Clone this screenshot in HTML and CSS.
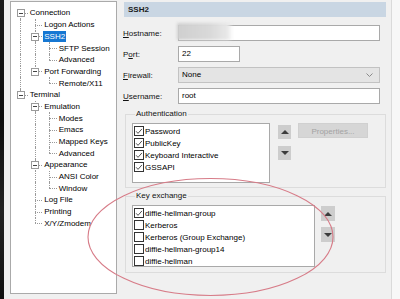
FILE: index.html
```html
<!DOCTYPE html>
<html>
<head>
<meta charset="utf-8">
<link rel="stylesheet" href="styles.css">
</head>
<body>
<div class="window">
  <div class="edge"></div>
  <div class="tree">
    <div class="row"><span class="c f"><span class="exp"></span></span><span class="lbl">Connection</span></div>
    <div class="row"><span class="c v"></span><span class="c t"></span><span class="lbl">Logon Actions</span></div>
    <div class="row"><span class="c v"></span><span class="c t"><span class="exp"></span></span><span class="lbl sel">SSH2</span></div>
    <div class="row"><span class="c v"></span><span class="c v"></span><span class="c t"></span><span class="lbl">SFTP Session</span></div>
    <div class="row"><span class="c v"></span><span class="c v"></span><span class="c l"></span><span class="lbl">Advanced</span></div>
    <div class="row"><span class="c v"></span><span class="c l"><span class="exp"></span></span><span class="lbl">Port Forwarding</span></div>
    <div class="row"><span class="c v"></span><span class="c"></span><span class="c l"></span><span class="lbl">Remote/X11</span></div>
    <div class="row"><span class="c l"><span class="exp"></span></span><span class="lbl">Terminal</span></div>
    <div class="row"><span class="c"></span><span class="c t"><span class="exp"></span></span><span class="lbl">Emulation</span></div>
    <div class="row"><span class="c"></span><span class="c v"></span><span class="c t"></span><span class="lbl">Modes</span></div>
    <div class="row"><span class="c"></span><span class="c v"></span><span class="c t"></span><span class="lbl">Emacs</span></div>
    <div class="row"><span class="c"></span><span class="c v"></span><span class="c t"></span><span class="lbl">Mapped Keys</span></div>
    <div class="row"><span class="c"></span><span class="c v"></span><span class="c l"></span><span class="lbl">Advanced</span></div>
    <div class="row"><span class="c"></span><span class="c t"><span class="exp"></span></span><span class="lbl">Appearance</span></div>
    <div class="row"><span class="c"></span><span class="c v"></span><span class="c t"></span><span class="lbl">ANSI Color</span></div>
    <div class="row"><span class="c"></span><span class="c v"></span><span class="c l"></span><span class="lbl">Window</span></div>
    <div class="row"><span class="c"></span><span class="c t"></span><span class="lbl">Log File</span></div>
    <div class="row"><span class="c"></span><span class="c t"></span><span class="lbl">Printing</span></div>
    <div class="row"><span class="c"></span><span class="c l"></span><span class="lbl">X/Y/Zmodem</span></div>
  </div>

  <div class="panel">
    <div class="header">SSH2</div>
    <div class="form">
      <label class="flabel"><u>H</u>ostname:</label>
      <div class="field"><span class="redact"></span></div>
      <label class="flabel">P<u>o</u>rt:</label>
      <div class="field port">22</div>
      <label class="flabel"><u>F</u>irewall:</label>
      <div class="field select"><span>None</span><svg class="chev" width="7" height="4" viewBox="0 0 7 4"><path d="M0.5 0.5 L3.5 3.5 L6.5 0.5" fill="none" stroke="#8a8a8a" stroke-width="1"/></svg></div>
      <label class="flabel"><u>U</u>sername:</label>
      <div class="field">root</div>
    </div>

    <fieldset class="group auth">
      <legend>Authentication</legend>
      <div class="gbody">
        <div class="list auth-list">
          <div class="item"><span class="cb on"><svg width="9" height="9" viewBox="0 0 9 9"><path d="M1.3 4.3 L3.4 6.6 L7.8 1.6" fill="none" stroke="#3a3a3a" stroke-width="1"/></svg></span>Password</div>
          <div class="item"><span class="cb on"><svg width="9" height="9" viewBox="0 0 9 9"><path d="M1.3 4.3 L3.4 6.6 L7.8 1.6" fill="none" stroke="#3a3a3a" stroke-width="1"/></svg></span>PublicKey</div>
          <div class="item"><span class="cb on"><svg width="9" height="9" viewBox="0 0 9 9"><path d="M1.3 4.3 L3.4 6.6 L7.8 1.6" fill="none" stroke="#3a3a3a" stroke-width="1"/></svg></span>Keyboard Interactive</div>
          <div class="item"><span class="cb on"><svg width="9" height="9" viewBox="0 0 9 9"><path d="M1.3 4.3 L3.4 6.6 L7.8 1.6" fill="none" stroke="#3a3a3a" stroke-width="1"/></svg></span>GSSAPI</div>
        </div>
        <div class="arrows auth-arrows">
          <span class="abtn"><span class="tri up"></span></span>
          <span class="abtn"><span class="tri down"></span></span>
        </div>
        <div class="props">Properties...</div>
      </div>
    </fieldset>

    <fieldset class="group kex">
      <legend>Key exchange</legend>
      <div class="gbody">
        <div class="list kex-list">
          <div class="item"><span class="cb on"><svg width="9" height="9" viewBox="0 0 9 9"><path d="M1.3 4.3 L3.4 6.6 L7.8 1.6" fill="none" stroke="#3a3a3a" stroke-width="1"/></svg></span>diffie-hellman-group</div>
          <div class="item"><span class="cb"></span>Kerberos</div>
          <div class="item"><span class="cb"></span>Kerberos (Group Exchange)</div>
          <div class="item"><span class="cb"></span>diffie-hellman-group14</div>
          <div class="item"><span class="cb"></span>diffie-hellman</div>
        </div>
        <div class="arrows kex-arrows">
          <span class="abtn"><span class="tri up"></span></span>
          <span class="abtn"><span class="tri down"></span></span>
        </div>
      </div>
    </fieldset>
  </div>
  <div class="rstrip"></div>
</div>
<svg class="mark" width="400" height="299" viewBox="0 0 400 299"><ellipse cx="210.5" cy="237" rx="122.5" ry="58.5" fill="none" stroke="#d77c88" stroke-width="1.1"/></svg>
</body>
</html>
```

FILE: styles.css
```css
html, body {
  margin: 0;
  padding: 0;
}
body {
  width: 400px;
  height: 299px;
  overflow: hidden;
  background: #f0f0f0;
  font-family: "Liberation Sans", Arial, sans-serif;
  font-size: 8px;
  color: #000;
  position: relative;
}
.window {
  display: flex;
  height: 299px;
}
.edge {
  width: 4px;
  flex: none;
  background: linear-gradient(180deg, #1b1b1b, #0e0e0e 40%, #222 70%, #111);
}
.tree {
  flex: none;
  box-sizing: border-box;
  width: 107px;
  height: 293px;
  margin: 1px 0 0 6px;
  border: 1px solid #aaaaaa;
  background: #fff;
  padding: 5.15px 0 0 2.25px;
}
.row {
  display: flex;
  align-items: center;
  height: 11.7px;
  white-space: nowrap;
}
.c {
  position: relative;
  flex: none;
  width: 14.5px;
  height: 100%;
}
.c.v::before, .c.t::before, .c.l::before, .c.f::before {
  content: "";
  position: absolute;
  left: 7px;
  top: 0;
  bottom: 0;
  border-left: 1px dotted #9a9a9a;
}
.c.l::before { bottom: 50%; }
.c.f::before { top: 50%; }
.c.t::after, .c.l::after, .c.f::after {
  content: "";
  position: absolute;
  left: 7px;
  right: 0;
  top: 50%;
  border-top: 1px dotted #9a9a9a;
}
.exp {
  position: absolute;
  z-index: 1;
  left: 3.5px;
  top: 2.35px;
  box-sizing: border-box;
  width: 8px;
  height: 8px;
  border: 1px solid #9a9a9a;
  background: #fff;
}
.exp::after {
  content: "";
  position: absolute;
  left: 1px;
  right: 1px;
  top: 2.5px;
  border-top: 1px solid #444;
}
.lbl {
  margin-left: 1px;
  line-height: 11px;
  padding: 0 1px;
}
.lbl.sel {
  background: #1677d2;
  color: #fff;
}

.panel {
  flex: none;
  width: 274px;
  box-sizing: border-box;
  padding: 2px 5px 0 7px;
}
.header {
  height: 15px;
  line-height: 15px;
  background: #c9d6e3;
  font-weight: bold;
  padding-left: 4px;
  color: #1a1a1a;
}
.form {
  display: grid;
  grid-template-columns: 55px 1fr;
  row-gap: 5px;
  align-items: center;
  margin: 8px 6px 0 -1px;
}
.flabel {
  color: #111;
}
.field {
  position: relative;
  box-sizing: border-box;
  height: 16px;
  line-height: 14px;
  border: 1px solid #a9a9a9;
  background: #fff;
  padding-left: 3px;
}
.field.port {
  width: 62px;
}
.field.select {
  display: flex;
  align-items: center;
  justify-content: space-between;
  background: #e4e4e4;
  border-color: #c2c2c2;
  padding-right: 6px;
}
.redact {
  position: absolute;
  left: -2px;
  top: -3px;
  width: 56px;
  height: 17px;
  background: linear-gradient(90deg, #cfcfcf, #d9d9d9 60%, #e8e8e8 90%, rgba(240,240,240,0));
  filter: blur(1.5px);
}

.group {
  margin: 5px 0 0 1px;
  padding: 0 0 4px 6px;
  border: 1px solid #dcdcdc;
  min-width: 0;
}
.group legend {
  padding: 0 1px;
  margin-left: 3px;
  line-height: 10px;
  color: #111;
}
.group.kex {
  margin-top: 3px;
  padding-bottom: 5px;
}
.gbody {
  display: flex;
  align-items: flex-start;
  margin-top: 4px;
}
.list {
  flex: none;
  box-sizing: border-box;
  border: 1px solid #a9a9a9;
  background: #fff;
  padding: 1px 0 0 1px;
}
.auth-list {
  width: 138px;
  height: 60px;
}
.kex-list {
  width: 183px;
  height: 62px;
}
.item {
  display: flex;
  align-items: center;
  height: 12px;
  white-space: nowrap;
}
.cb {
  flex: none;
  box-sizing: border-box;
  width: 10px;
  height: 10px;
  border: 1px solid #333;
  background: #fff;
  margin-right: 1px;
  display: flex;
  align-items: center;
  justify-content: center;
}
.cb svg {
  display: block;
}
.arrows {
  display: flex;
  flex-direction: column;
  flex: none;
}
.auth-arrows {
  margin: 2px 0 0 8px;
  gap: 7px;
}
.kex-arrows {
  margin: 1px 0 0 6px;
  gap: 6px;
}
.abtn {
  box-sizing: border-box;
  width: 13px;
  height: 14px;
  background: #cdcdcd;
  display: flex;
  align-items: center;
  justify-content: center;
}
.kex-arrows .abtn {
  width: 14px;
  height: 15px;
}
.tri {
  width: 0;
  height: 0;
  border-left: 4px solid transparent;
  border-right: 4px solid transparent;
}
.tri.up {
  border-bottom: 4px solid #3c3c3c;
}
.tri.down {
  border-top: 4px solid #3c3c3c;
}
.props {
  flex: none;
  margin-left: 7px;
  width: 70px;
  height: 15px;
  line-height: 15px;
  text-align: center;
  background: #d6d6d6;
  color: #a3a3a3;
  border: 1px solid #d0d0d0;
  box-sizing: border-box;
}
.rstrip {
  flex: 1;
  border-left: 1px solid #dadada;
  background: #f7f7f7;
}
.mark {
  position: absolute;
  left: 0;
  top: 0;
  pointer-events: none;
}
```
